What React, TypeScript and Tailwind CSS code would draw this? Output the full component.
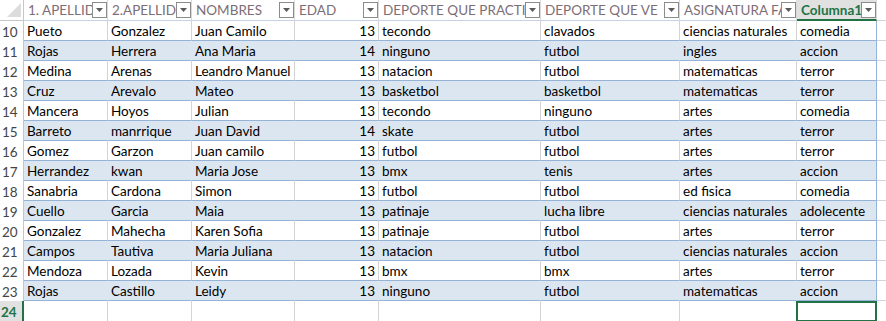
import React from 'react';

const HEADERS = [
  '1. APELLIDO',
  '2.APELLIDO',
  'NOMBRES',
  'EDAD',
  'DEPORTE QUE PRACTICA',
  'DEPORTE QUE VE',
  'ASIGNATURA FAVORITA',
  'Columna1',
];

const ROWS: string[][] = [
  ['Pueto', 'Gonzalez', 'Juan Camilo', '13', 'tecondo', 'clavados', 'ciencias naturales', 'comedia'],
  ['Rojas', 'Herrera', 'Ana Maria', '14', 'ninguno', 'futbol', 'ingles', 'accion'],
  ['Medina', 'Arenas', 'Leandro Manuel', '13', 'natacion', 'futbol', 'matematicas', 'terror'],
  ['Cruz', 'Arevalo', 'Mateo', '13', 'basketbol', 'basketbol', 'matematicas', 'terror'],
  ['Mancera', 'Hoyos', 'Julian', '13', 'tecondo', 'ninguno', 'artes', 'comedia'],
  ['Barreto', 'manrrique', 'Juan David', '14', 'skate', 'futbol', 'artes', 'terror'],
  ['Gomez', 'Garzon', 'Juan camilo', '13', 'futbol', 'futbol', 'artes', 'terror'],
  ['Herrandez', 'kwan', 'Maria Jose', '13', 'bmx', 'tenis', 'artes', 'accion'],
  ['Sanabria', 'Cardona', 'Simon', '13', 'futbol', 'futbol', 'ed fisica', 'comedia'],
  ['Cuello', 'Garcia', 'Maia', '13', 'patinaje', 'lucha libre', 'ciencias naturales', 'adolecente'],
  ['Gonzalez', 'Mahecha', 'Karen Sofia', '13', 'patinaje', 'futbol', 'artes', 'terror'],
  ['Campos', 'Tautiva', 'Maria Juliana', '13', 'natacion', 'futbol', 'ciencias naturales', 'accion'],
  ['Mendoza', 'Lozada', 'Kevin', '13', 'bmx', 'bmx', 'artes', 'terror'],
  ['Rojas', 'Castillo', 'Leidy', '13', 'ninguno', 'futbol', 'matematicas', 'accion'],
];

const FIRST_ROW = 10;

// excel grid: row header + A..H + leftover
const gridCols = 'grid grid-cols-[24px_84px_84px_103px_84px_162px_139px_117px_80px_1fr]';

function FilterButton() {
  return (
    <div className="absolute right-0 top-[2px] flex h-[16px] w-[15px] items-center justify-center border border-[#8c8c8c] bg-white">
      <svg width="7" height="4" viewBox="0 0 7 4">
        <path d="M0 0h7L3.5 4z" fill="#5a5a5a" />
      </svg>
    </div>
  );
}

function HeaderCell({ label, active }: { label: string; active: boolean }) {
  return (
    <div
      className={
        'relative h-[21px] overflow-hidden whitespace-nowrap border-r border-[#dadada] pl-[4px] leading-[20px] ' +
        (active
          ? 'border-b-2 border-b-[#217346] bg-[#e1e1e1] pl-[3px] font-bold text-[#217346]'
          : 'border-b border-b-[#c5d3e6] bg-white text-[#7d6e76]')
      }
    >
      {label}
      <FilterButton />
    </div>
  );
}

function DataRow({ cells, rowNum }: { cells: string[]; rowNum: number }) {
  const banded = rowNum % 2 === 1;
  return (
    <>
      <div className="h-[20px] border-r border-[#c6c6c6] bg-white pl-[2px] pt-[2px] leading-[18px] text-[#444]">{rowNum}</div>
      {cells.map((c, i) => (
        <div
          key={i}
          className={
            'h-[20px] overflow-hidden whitespace-nowrap border-b border-r border-b-[#95b3d7] px-[3px] pt-[2px] leading-[17px] text-black ' +
            (banded ? 'bg-[#dce6f1] ' : 'bg-white ') +
            (i === 7 ? 'border-r-[#95b3d7] ' : banded ? 'border-r-[#dce6f1] ' : 'border-r-[#d4d4d4] ') +
            (i === 3 ? 'text-right' : '')
          }
        >
          {c}
        </div>
      ))}
      <div className="h-[20px] border-b border-[#d4d4d4] bg-white" />
    </>
  );
}

export default function App() {
  return (
    <div className="h-[321px] w-[886px] overflow-hidden bg-white text-[13.5px] font-['Lato','Liberation_Sans',sans-serif]">
      <div className={gridCols}>
        {/* select-all corner */}
        <div className="relative h-[21px] border-b border-r border-[#c6c6c6] bg-white">
          <svg className="absolute bottom-[3px] right-[2px]" width="14" height="14" viewBox="0 0 14 14">
            <path d="M14 0v14H0z" fill="#dcdcdc" />
          </svg>
        </div>
        {HEADERS.map((h, i) => (
          <HeaderCell key={h} label={h} active={i === 7} />
        ))}
        <div className="h-[21px] border-b border-[#d4d4d4] bg-white" />

        {ROWS.map((r, i) => (
          <DataRow key={i} cells={r} rowNum={FIRST_ROW + i} />
        ))}

        {/* row 24, active cell in column H */}
        <div className="h-[20px] border-r-2 border-[#217346] bg-[#e1e1e1] pl-[1px] pt-[2px] font-bold leading-[18px] text-[#217346]">24</div>
        {Array.from({ length: 7 }).map((_, i) => (
          <div key={i} className="h-[20px] border-r border-[#d4d4d4]" />
        ))}
        <div className="ml-[-1px] h-[21px] border-2 border-[#217346]" />
        <div className="h-[20px]" />
      </div>
    </div>
  );
}
